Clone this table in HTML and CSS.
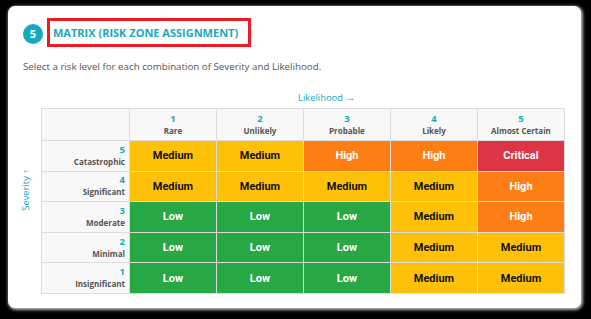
FILE: index.html
```html
<!DOCTYPE html>
<html>
<head>
<meta charset="utf-8">
<link rel="stylesheet" href="styles.css">
</head>
<body>
<div class="card">
  <div class="head">
    <span class="badge">5</span>
    <div class="title-box"><h2 class="title">MATRIX (RISK ZONE ASSIGNMENT)</h2></div>
  </div>
  <p class="sub">Select a risk level for each combination of Severity and Likelihood.</p>
  <div class="axis-x">Likelihood →</div>
  <div class="matrix">
    <div class="axis-y"><span class="axis-y-text">Severity ↑</span></div>
    <table class="grid">
      <colgroup>
        <col class="c-label"><col><col><col><col><col>
      </colgroup>
      <thead>
        <tr>
          <th class="corner"></th>
          <th><span class="num">1</span><span class="lab">Rare</span></th>
          <th><span class="num">2</span><span class="lab">Unlikely</span></th>
          <th><span class="num">3</span><span class="lab">Probable</span></th>
          <th><span class="num">4</span><span class="lab">Likely</span></th>
          <th><span class="num">5</span><span class="lab">Almost Certain</span></th>
        </tr>
      </thead>
      <tbody>
        <tr>
          <th class="rowh"><span class="num">5</span><span class="lab">Catastrophic</span></th>
          <td class="med">Medium</td><td class="med">Medium</td><td class="high">High</td><td class="high">High</td><td class="crit">Critical</td>
        </tr>
        <tr>
          <th class="rowh"><span class="num">4</span><span class="lab">Significant</span></th>
          <td class="med">Medium</td><td class="med">Medium</td><td class="med">Medium</td><td class="med">Medium</td><td class="high">High</td>
        </tr>
        <tr>
          <th class="rowh"><span class="num">3</span><span class="lab">Moderate</span></th>
          <td class="low">Low</td><td class="low">Low</td><td class="low">Low</td><td class="med">Medium</td><td class="high">High</td>
        </tr>
        <tr>
          <th class="rowh"><span class="num">2</span><span class="lab">Minimal</span></th>
          <td class="low">Low</td><td class="low">Low</td><td class="low">Low</td><td class="med">Medium</td><td class="med">Medium</td>
        </tr>
        <tr>
          <th class="rowh"><span class="num">1</span><span class="lab">Insignificant</span></th>
          <td class="low">Low</td><td class="low">Low</td><td class="low">Low</td><td class="med">Medium</td><td class="med">Medium</td>
        </tr>
      </tbody>
    </table>
  </div>
</div>
</body>
</html>
```
FILE: styles.css
```css
html, body {
  margin: 0;
  padding: 0;
  background: #000;
}
body {
  font-family: "Open Sans", "Liberation Sans", sans-serif;
  width: 591px;
  height: 319px;
  overflow: hidden;
}
.card {
  box-sizing: border-box;
  margin: 6px 0 0 8px;
  width: 573px;
  height: 302px;
  background: #fff;
  border-radius: 7px;
  box-shadow: 1px 1px 3px 1px rgba(200, 200, 200, 0.9);
  padding: 12px 16px 0 15px;
}
.head {
  display: flex;
  align-items: center;
  gap: 4px;
}
.badge {
  width: 20px;
  height: 20px;
  border-radius: 50%;
  background: #17a9bf;
  color: #fff;
  font-weight: 700;
  font-size: 11px;
  display: flex;
  align-items: center;
  justify-content: center;
  margin-top: 2px;
}
.title-box {
  border: 3px solid #ed1c24;
  height: 23px;
  box-sizing: content-box;
  width: 195px;
  display: flex;
  align-items: center;
  padding-left: 3px;
}
.title {
  margin: 0;
  font-size: 11px;
  font-weight: 700;
  color: #17a9bf;
  white-space: nowrap;
}
.sub {
  margin: 13px 0 0 0;
  font-size: 9.75px;
  line-height: 13px;
  color: #555;
}
.axis-x {
  margin-top: 18px;
  padding-left: 275px;
  font-size: 9.4px;
  line-height: 13px;
  color: #17a9bf;
}
.matrix {
  display: flex;
  margin-top: 4px;
}
.axis-y {
  width: 18px;
  display: flex;
  align-items: center;
  padding-bottom: 22px;
}
.axis-y-text {
  writing-mode: vertical-rl;
  transform: rotate(180deg);
  font-size: 9.4px;
  color: #17a9bf;
  margin-left: -4px;
  white-space: nowrap;
}
.grid {
  border-collapse: collapse;
  table-layout: fixed;
  width: 525px;
}
.c-label {
  width: 88px;
}
.grid th, .grid td {
  border: 1px solid #dcdcdc;
  padding: 0;
}
.grid thead th {
  background: #f8f8f8;
  height: 31px;
  text-align: center;
  vertical-align: middle;
}
.grid .num {
  display: block;
  color: #17a9bf;
  font-size: 9.5px;
  font-weight: 700;
  line-height: 12px;
}
.grid .lab {
  display: block;
  color: #555;
  font-size: 8px;
  font-weight: 700;
  line-height: 12px;
}
.grid .rowh {
  background: #f8f8f8;
  text-align: right;
  padding-right: 4px;
  height: 29.6px;
  vertical-align: middle;
}
.grid td {
  text-align: center;
  vertical-align: middle;
  font-family: Roboto, "Liberation Sans", sans-serif;
  font-size: 11px;
  font-weight: 700;
  height: 29.6px;
}
.med { background: #ffc107; color: #111; }
.high { background: #fd7e14; color: #fff; }
.crit { background: #dc3545; color: #fff; }
.low { background: #28a745; color: #fff; }
```
